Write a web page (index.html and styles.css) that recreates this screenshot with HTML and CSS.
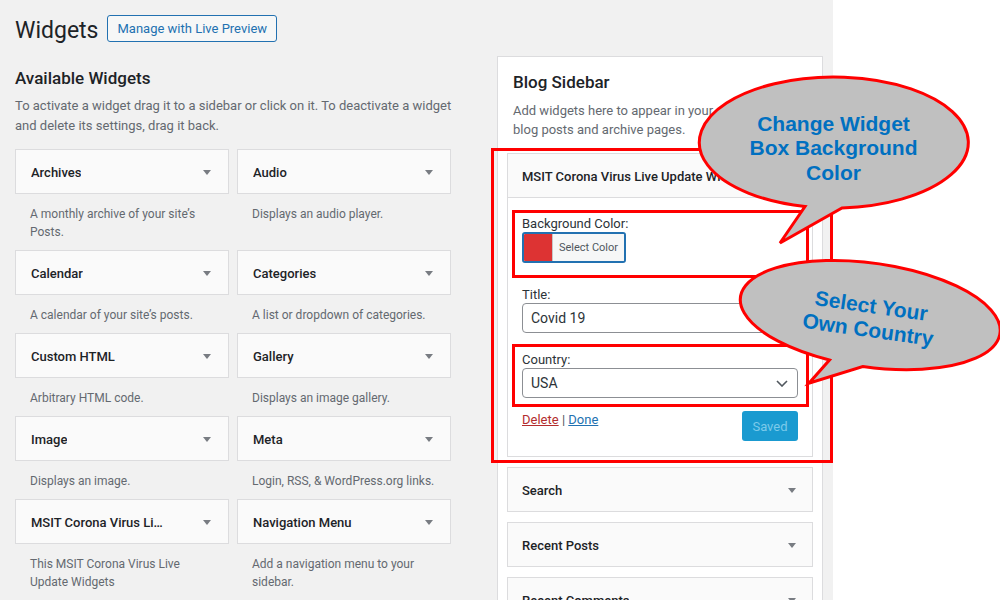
FILE: index.html
```html
<!DOCTYPE html>
<html lang="en">
<head>
<meta charset="utf-8">
<title>Widgets</title>
<link rel="stylesheet" href="styles.css">
</head>
<body>
<div class="screen">
  <main class="wrap">
    <header class="page-head">
      <h1>Widgets</h1>
      <a class="title-action">Manage with Live Preview</a>
    </header>
    <div class="cols">
      <section class="available">
        <h2>Available Widgets</h2>
        <p class="intro">To activate a widget drag it to a sidebar or click on it. To deactivate a widget and delete its settings, drag it back.</p>
        <div class="widget-grid">
          <div class="widget">
            <div class="widget-top"><span class="widget-title">Archives</span><span class="arrow"></span></div>
            <p class="widget-desc">A monthly archive of your site’s Posts.</p>
          </div>
          <div class="widget">
            <div class="widget-top"><span class="widget-title">Audio</span><span class="arrow"></span></div>
            <p class="widget-desc">Displays an audio player.</p>
          </div>
          <div class="widget">
            <div class="widget-top"><span class="widget-title">Calendar</span><span class="arrow"></span></div>
            <p class="widget-desc">A calendar of your site’s posts.</p>
          </div>
          <div class="widget">
            <div class="widget-top"><span class="widget-title">Categories</span><span class="arrow"></span></div>
            <p class="widget-desc">A list or dropdown of categories.</p>
          </div>
          <div class="widget">
            <div class="widget-top"><span class="widget-title">Custom HTML</span><span class="arrow"></span></div>
            <p class="widget-desc">Arbitrary HTML code.</p>
          </div>
          <div class="widget">
            <div class="widget-top"><span class="widget-title">Gallery</span><span class="arrow"></span></div>
            <p class="widget-desc">Displays an image gallery.</p>
          </div>
          <div class="widget">
            <div class="widget-top"><span class="widget-title">Image</span><span class="arrow"></span></div>
            <p class="widget-desc">Displays an image.</p>
          </div>
          <div class="widget">
            <div class="widget-top"><span class="widget-title">Meta</span><span class="arrow"></span></div>
            <p class="widget-desc">Login, RSS, &amp; WordPress.org links.</p>
          </div>
          <div class="widget">
            <div class="widget-top"><span class="widget-title widget-title-long">MSIT Corona Virus Live Update Widgets</span><span class="arrow"></span></div>
            <p class="widget-desc">This MSIT Corona Virus Live Update Widgets</p>
          </div>
          <div class="widget">
            <div class="widget-top"><span class="widget-title">Navigation Menu</span><span class="arrow"></span></div>
            <p class="widget-desc">Add a navigation menu to your sidebar.</p>
          </div>
        </div>
      </section>

      <section class="sidebar">
        <h2>Blog Sidebar</h2>
        <p class="sidebar-desc">Add widgets here to appear in your sidebar on blog posts and archive pages.</p>

        <div class="wbox open">
          <div class="wbox-head"><span class="widget-title">MSIT Corona Virus Live Update Widgets</span><span class="arrow"></span></div>
          <div class="wbox-body">
            <div class="field">
              <label class="field-label">Background Color:</label>
              <span class="color-btn"><span class="swatch"></span><span class="color-text">Select Color</span></span>
            </div>
            <div class="field field-title">
              <label class="field-label">Title:</label>
              <div class="text-input">Covid 19</div>
            </div>
            <div class="field field-country">
              <label class="field-label">Country:</label>
              <div class="select-input"><span>USA</span>
                <svg class="chevron" width="12" height="7" viewBox="0 0 12 7"><path d="M1 1 L6 6 L11 1" fill="none" stroke="#50575e" stroke-width="1.6"/></svg>
              </div>
            </div>
            <div class="controls">
              <span class="links"><a class="link-delete">Delete</a> <span class="sep">|</span> <a class="link-done">Done</a></span>
              <span class="btn-saved">Saved</span>
            </div>
          </div>
        </div>

        <div class="wbox">
          <div class="wbox-head"><span class="widget-title">Search</span><span class="arrow"></span></div>
        </div>
        <div class="wbox">
          <div class="wbox-head"><span class="widget-title">Recent Posts</span><span class="arrow"></span></div>
        </div>
        <div class="wbox">
          <div class="wbox-head"><span class="widget-title">Recent Comments</span><span class="arrow"></span></div>
        </div>
      </section>
    </div>
  </main>

  <div class="overlay">
    <div class="mark mark-widget"></div>
    <div class="mark mark-color"></div>
    <div class="mark mark-country"></div>

    <svg class="callouts" width="1000" height="600" viewBox="0 0 1000 600">
      <g transform="translate(833.5 142.5)">
        <path class="bubble" d="M 8.5 65.4 A 134.5 65.5 0 1 0 -28.5 64 L -53.5 100.5 Z"/>
        <text class="bubble-text" x="0" y="-12">Change Widget</text>
        <text class="bubble-text" x="0" y="12.5">Box Background</text>
        <text class="bubble-text" x="0" y="37">Color</text>
      </g>
      <g transform="translate(870 315) rotate(8)">
        <path class="bubble" d="M 0 52 A 131 52 0 1 0 -33.9 50.2 L -51 76 Z"/>
        <text class="bubble-text" x="0" y="-2">Select Your</text>
        <text class="bubble-text" x="0" y="22">Own Country</text>
      </g>
    </svg>
  </div>
</div>
</body>
</html>
```

FILE: styles.css
```css
* { box-sizing: border-box; }

html, body {
  margin: 0;
  padding: 0;
}

body {
  background: #ffffff;
  font-family: Roboto, "Liberation Sans", Arial, sans-serif;
  color: #3c434a;
}

.screen {
  position: relative;
  width: 1000px;
  height: 600px;
  overflow: hidden;
}

.wrap {
  width: 833px;
  height: 600px;
  background: #f1f1f1;
  padding: 15px 0 0 15px;
}

/* ---------- page heading ---------- */
.page-head {
  display: flex;
  align-items: center;
  gap: 9px;
  height: 27px;
}

.page-head h1 {
  margin: 4px 0 0;
  font-size: 23px;
  font-weight: 400;
  line-height: 29px;
  color: #1d2327;
}

.title-action {
  display: flex;
  align-items: center;
  height: 27px;
  padding: 0 9px;
  font-size: 13px;
  color: #2271b1;
  background: #f6f7f7;
  border: 1px solid #2271b1;
  border-radius: 3px;
}

.cols {
  display: flex;
  align-items: flex-start;
  gap: 46px;
  margin-top: 14px;
}

/* ---------- available widgets ---------- */
.available {
  width: 436px;
  flex: none;
  padding-top: 10px;
}

.available h2 {
  margin: 0;
  font-size: 17px;
  font-weight: 500;
  line-height: 24px;
  color: #1d2327;
}

.intro {
  width: 446px;
  margin: 6px 0 0;
  font-size: 13px;
  line-height: 20px;
  color: #646970;
}

.widget-grid {
  display: grid;
  grid-template-columns: 214px 214px;
  column-gap: 8px;
  margin-top: 13px;
}

.widget-top {
  display: flex;
  align-items: center;
  justify-content: space-between;
  height: 45px;
  padding: 1px 17px 0 15px;
  background: #fafafa;
  border: 1px solid #dcdcde;
}

.widget-title {
  min-width: 0;
  margin-right: 30px;
  font-size: 13px;
  font-weight: 500;
  color: #1d2327;
  white-space: nowrap;
  overflow: hidden;
  text-overflow: ellipsis;
}

.widget-title-long {
  margin-right: 36px;
}

.arrow {
  flex: none;
  width: 0;
  height: 0;
  border-left: 4px solid transparent;
  border-right: 4px solid transparent;
  border-top: 5px solid #787c82;
}

.widget-desc {
  margin: 0;
  padding: 11px 15px 9px;
  font-size: 12px;
  line-height: 18px;
  color: #646970;
}

/* ---------- sidebar ---------- */
.sidebar {
  width: 326px;
  height: 560px;
  flex: none;
  padding: 13px 9px 0;
  background: #ffffff;
  border: 1px solid #dcdcde;
}

.sidebar h2 {
  margin: 0;
  padding: 0 6px;
  font-size: 17px;
  font-weight: 500;
  line-height: 24px;
  color: #1d2327;
}

.sidebar-desc {
  max-width: 292px;
  margin: 7px 0 0;
  padding: 0 6px;
  font-size: 13px;
  line-height: 19px;
  color: #646970;
}

.wbox {
  margin-top: 10px;
  background: #fafafa;
  border: 1px solid #dcdcde;
}

.sidebar-desc + .wbox {
  margin-top: 14px;
}

.wbox-head {
  display: flex;
  align-items: center;
  justify-content: space-between;
  height: 43px;
  padding: 1px 16px 0 14px;
}

.wbox.open .wbox-head {
  height: 44px;
  border-bottom: 1px solid #dcdcde;
}

.wbox-body {
  padding: 18px 14px 15px;
  background: #ffffff;
}

.field-label {
  display: block;
  font-size: 13px;
  line-height: 16px;
  color: #2c3338;
}

.field-title {
  margin-top: 24px;
}

.field-country {
  margin-top: 19px;
}

.color-btn {
  display: flex;
  width: 104px;
  height: 31px;
  border: 2px solid #2271b1;
  border-radius: 3px;
  overflow: hidden;
}

.swatch {
  width: 29px;
  flex: none;
  background: #dd3333;
  border-right: 1px solid #c7c7c7;
}

.color-text {
  flex: 1;
  display: flex;
  align-items: center;
  justify-content: center;
  font-size: 11px;
  color: #50575e;
  background: #f6f7f7;
}

.text-input,
.select-input {
  display: flex;
  align-items: center;
  height: 30px;
  padding: 0 8px;
  font-size: 14px;
  color: #2c3338;
  background: #ffffff;
  border: 1px solid #8c8f94;
  border-radius: 4px;
}

.select-input {
  justify-content: space-between;
}

.chevron {
  margin-right: 1px;
}

.controls {
  display: flex;
  justify-content: space-between;
  align-items: flex-start;
  margin-top: 13px;
}

.links {
  font-size: 13px;
  line-height: 18px;
}

.link-delete {
  color: #b32d2e;
  text-decoration: underline;
}

.sep {
  color: #50575e;
}

.link-done {
  color: #2271b1;
  text-decoration: underline;
}

.btn-saved {
  display: flex;
  align-items: center;
  justify-content: center;
  width: 56px;
  height: 30px;
  font-size: 13px;
  color: #7ccaea;
  background: #1a9ad0;
  border-radius: 3px;
}

/* ---------- annotations ---------- */
.overlay {
  position: absolute;
  left: 0;
  top: 0;
  width: 1000px;
  height: 600px;
  pointer-events: none;
}

.mark {
  position: absolute;
  border: 3px solid #ff0000;
}

.mark-widget {
  left: 491px;
  top: 148px;
  width: 342px;
  height: 315px;
}

.mark-color {
  left: 512px;
  top: 210px;
  width: 297px;
  height: 68px;
}

.mark-country {
  left: 512px;
  top: 344px;
  width: 297px;
  height: 63px;
}

.callouts {
  position: absolute;
  left: 0;
  top: 0;
}

.bubble {
  fill: #c0c0c0;
  stroke: #ff0000;
  stroke-width: 3;
  stroke-linejoin: miter;
}

.bubble-text {
  font-family: "Liberation Sans", Arial, sans-serif;
  font-weight: bold;
  font-size: 21px;
  fill: #0070c0;
  text-anchor: middle;
}
```
